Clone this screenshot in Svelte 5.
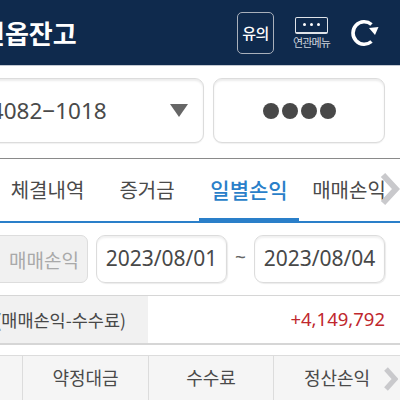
<script lang="ts">
  const tabs = ['체결내역', '증거금', '일별손익', '매매손익'];
  const active = '일별손익';
  const columns = ['약정대금', '수수료', '정산손익'];
</script>

<div class="screen">
  <header class="topbar">
    <h1 class="title">선옵잔고</h1>
    <div class="actions">
      <button class="notice">유의</button>
      <div class="related">
        <span class="dots"><i></i><i></i><i></i></span>
        <span class="related-label">연관메뉴</span>
      </div>
      <svg class="refresh" width="28" height="30" viewBox="0 0 28 30">
        <path d="M20.5 23.5A11.2 11.2 0 1 1 20.5 6.5" fill="none" stroke="#fff" stroke-width="3.6" />
        <path d="M18 10L27.5 9L24 17Z" fill="#fff" />
      </svg>
    </div>
  </header>

  <section class="account">
    <div class="box select">
      <span>110-4082−1018</span>
      <i class="caret"></i>
    </div>
    <div class="box password">
      <i></i><i></i><i></i><i></i>
    </div>
  </section>

  <nav class="tabs">
    {#each tabs as tab}
      <span class="tab" class:active={tab === active}>{tab}</span>
    {/each}
    <svg class="chevron tab-chevron" width="20" height="36" viewBox="0 0 20 36">
      <path d="M3 4L16 18L3 32" fill="none" stroke="#c9c9cc" stroke-width="6" />
    </svg>
  </nav>

  <section class="filter">
    <button class="kind">매매손익</button>
    <div class="date">2023/08/01</div>
    <span class="tilde">~</span>
    <div class="date">2023/08/04</div>
  </section>

  <section class="summary">
    <div class="summary-label">정산손익(매매손익-수수료)</div>
    <div class="summary-value">+4,149,792</div>
  </section>

  <section class="thead">
    <div class="cell first"></div>
    {#each columns as col}
      <div class="cell">{col}</div>
    {/each}
    <svg class="chevron head-chevron" width="14" height="24" viewBox="0 0 14 24">
      <path d="M2 2L11 12L2 22" fill="none" stroke="#c9c9cc" stroke-width="5" />
    </svg>
  </section>
</div>

<style>
  :global(body) {
    margin: 0;
    background: #fff;
  }

  .screen {
    width: 400px;
    height: 400px;
    overflow: hidden;
    font-family: 'Noto Sans CJK KR', 'Noto Sans', sans-serif;
    color: #444;
    background: #fff;
  }

  .topbar {
    height: 65px;
    display: flex;
    align-items: center;
    justify-content: space-between;
    background: #0f2a4d;
    border-bottom: 1px solid #c3c9d2;
  }

  .title {
    margin: 0 0 0 -19px;
    font-size: 26px;
    font-weight: 700;
    color: #fff;
  }

  .actions {
    display: flex;
    align-items: center;
    margin-right: 21px;
  }

  .notice {
    width: 37px;
    height: 42px;
    padding: 0;
    background: transparent;
    border: 1.5px solid #a9b0bb;
    border-radius: 5px;
    color: #fff;
    font-family: inherit;
    font-size: 15px;
    font-weight: 500;
    letter-spacing: -0.5px;
  }

  .related {
    width: 37px;
    margin-left: 19px;
    display: flex;
    flex-direction: column;
    align-items: center;
  }

  .dots {
    box-sizing: border-box;
    width: 33px;
    height: 17px;
    display: flex;
    align-items: center;
    justify-content: center;
    gap: 4px;
    border: 1.5px solid #dfe3e8;
    border-bottom-width: 2px;
    border-radius: 2px;
  }

  .dots i {
    width: 3px;
    height: 3px;
    border-radius: 50%;
    background: #fff;
  }

  .related-label {
    margin-top: 1px;
    font-size: 11px;
    line-height: 14px;
    letter-spacing: -0.9px;
    color: #cfd5dd;
    white-space: nowrap;
  }

  .refresh {
    margin-left: 21px;
  }

  .account {
    display: flex;
    gap: 9px;
    margin: 12px 15px 15px -30px;
    height: 65px;
  }

  .box {
    box-sizing: border-box;
    display: flex;
    align-items: center;
    background: #fff;
    border: 1px solid #dcdcdc;
    border-radius: 9px;
    box-shadow: inset 0 2px 2px rgba(0, 0, 0, 0.08), 0 1px 1px rgba(0, 0, 0, 0.06);
  }

  .select {
    width: 234px;
    font-size: 22.5px;
    justify-content: space-between;
    padding-right: 15px;
    color: #4a4a4a;
    font-family: 'Noto Sans', sans-serif;
  }

  .select span {
    margin-left: -26px;
    white-space: nowrap;
  }

  .caret {
    width: 0;
    height: 0;
    border-left: 9px solid transparent;
    border-right: 9px solid transparent;
    border-top: 13px solid #666;
  }

  .password {
    flex: 1;
    justify-content: center;
    gap: 3px;
  }

  .password i {
    width: 16px;
    height: 16px;
    border-radius: 50%;
    background: #484848;
  }

  .tabs {
    position: relative;
    height: 62px;
    display: flex;
    border-top: 1px solid #8a8a8a;
    border-bottom: 2px solid #2a7fc9;
  }

  .tab {
    flex: none;
    width: 100px;
    text-align: center;
    font-size: 20px;
    line-height: 61px;
    color: #4a4a4a;
    white-space: nowrap;
  }

  .tab:first-child {
    width: 95px;
  }

  .tab:nth-child(2) {
    width: 104px;
  }

  .tab.active {
    color: #2a7fc9;
    font-size: 21px;
    font-weight: 500;
    box-shadow: inset 0 -3px 0 #2a7fc9;
  }

  .chevron {
    position: absolute;
  }

  .tab-chevron {
    top: 12px;
    right: 0;
  }

  .filter {
    display: flex;
    align-items: center;
    height: 48px;
    margin: 12px 15px 12px -30px;
  }

  .kind {
    box-sizing: border-box;
    width: 118px;
    height: 48px;
    padding: 0 0 0 30px;
    margin-right: 8px;
    font-family: inherit;
    font-size: 19px;
    color: #a9a9a9;
    background: #f1f1f1;
    border: 1px solid #dddddd;
    border-radius: 7px;
    white-space: nowrap;
  }

  .date {
    box-sizing: border-box;
    width: 131px;
    height: 48px;
    line-height: 44px;
    text-align: center;
    font-family: 'Noto Sans', sans-serif;
    font-size: 21px;
    color: #484848;
    border: 1px solid #dcdcdc;
    border-radius: 9px;
    box-shadow: inset 0 2px 2px rgba(0, 0, 0, 0.06), 1px 1px 1px rgba(0, 0, 0, 0.08);
  }

  .tilde {
    flex: 1;
    text-align: center;
    font-family: 'Noto Sans', sans-serif;
    font-size: 19px;
    line-height: 44px;
    padding-bottom: 4px;
    color: #666;
  }

  .summary {
    display: flex;
    height: 47px;
    border-top: 1px solid #d6d6d6;
    border-bottom: 2px solid #d6d6d6;
  }

  .summary-label {
    width: 148px;
    flex: none;
    display: flex;
    justify-content: flex-end;
    align-items: center;
    padding-right: 22px;
    box-sizing: border-box;
    background: #f1f1f1;
    font-size: 17.5px;
    color: #484848;
    white-space: nowrap;
  }

  .summary-value {
    flex: 1;
    text-align: right;
    padding-right: 15px;
    line-height: 45px;
    font-family: 'Noto Sans', sans-serif;
    font-size: 18.5px;
    color: #c0272d;
  }

  .thead {
    position: relative;
    display: grid;
    grid-template-columns: 22px 126px 125px 127px;
    height: 45px;
    margin-top: 10px;
    background: #f5f5f5;
    border-top: 1px solid #dcdcdc;
    border-bottom: 1px solid #dcdcdc;
  }

  .cell {
    display: flex;
    align-items: center;
    justify-content: center;
    padding-bottom: 3px;
    font-size: 18px;
    color: #4a4a4a;
    border-left: 1px solid #dcdcdc;
  }

  .cell.first {
    border-left: none;
  }

  .head-chevron {
    top: 11px;
    right: 2px;
  }
</style>
